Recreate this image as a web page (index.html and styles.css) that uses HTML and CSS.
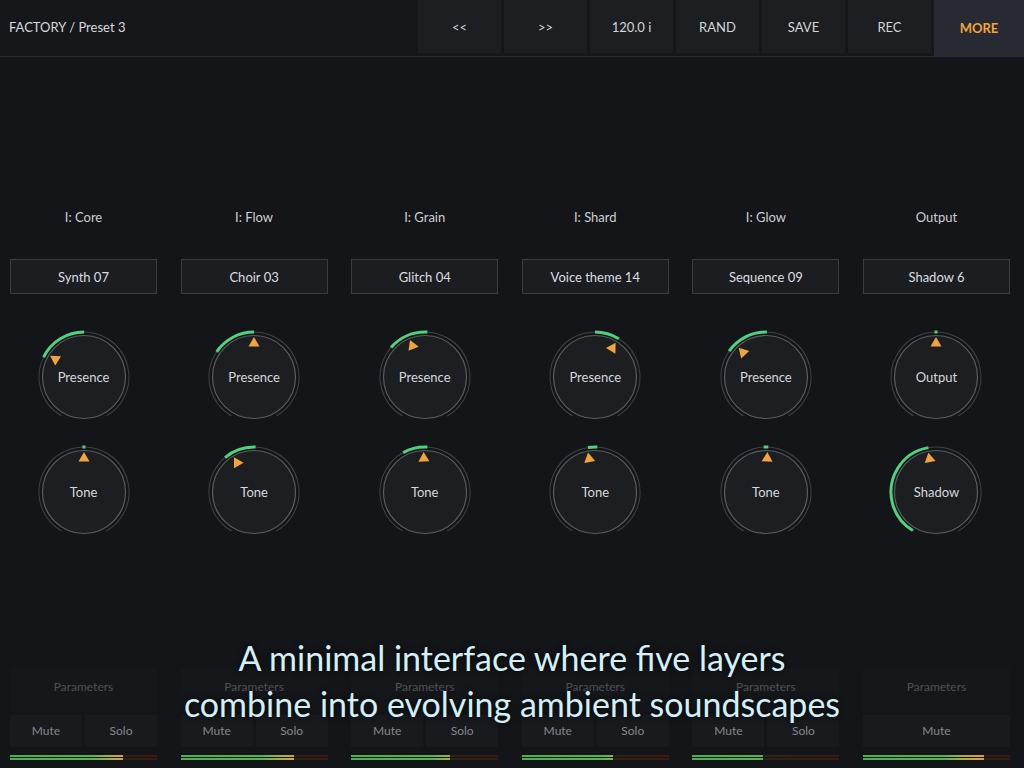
FILE: index.html
```html
<!DOCTYPE html>
<html lang="en">
<head>
  <meta charset="UTF-8" />
  <meta name="viewport" content="width=device-width, initial-scale=1.0"/>
  <title>Layers</title>
  <link rel="stylesheet" href="styles.css">
</head>
<body>
  <header class="topbar">
    <div class="preset-name">FACTORY / Preset 3</div>
    <nav class="actions">
      <button class="action">&lt;&lt;</button>
      <button class="action">&gt;&gt;</button>
      <button class="action">120.0 i</button>
      <button class="action">RAND</button>
      <button class="action">SAVE</button>
      <button class="action">REC</button>
      <button class="action more">MORE</button>
    </nav>
  </header>

  <main class="columns">

    <!-- layer 1 -->
    <section class="col">
      <div class="col-label">I: Core</div>
      <div class="preset">Synth 07</div>
      <div class="knob">
        <svg viewBox="0 0 100 100">
          <circle class="ring" cx="50" cy="50" r="45" stroke-dasharray="235.6 300" transform="rotate(120 50 50)"/>
          <circle class="arc" cx="50" cy="50" r="45" stroke-dasharray="50.3 300" transform="rotate(-154 50 50)"/>
          <circle class="face" cx="50" cy="50" r="41.5"/>
          <polygon class="pointer" points="50,10 44.5,19.5 55.5,19.5" transform="rotate(-58 50 50)"/>
        </svg>
        <span class="knob-label">Presence</span>
      </div>
      <div class="knob">
        <svg viewBox="0 0 100 100">
          <circle class="ring" cx="50" cy="50" r="45" stroke-dasharray="235.6 300" transform="rotate(120 50 50)"/>
          <circle class="arc" cx="50" cy="50" r="45" stroke-dasharray="3.1 300" transform="rotate(-92 50 50)"/>
          <circle class="face" cx="50" cy="50" r="41.5"/>
          <polygon class="pointer" points="50,10 44.5,19.5 55.5,19.5"/>
        </svg>
        <span class="knob-label">Tone</span>
      </div>
      <div class="params">Parameters</div>
      <div class="toggles">
        <button class="toggle">Mute</button>
        <button class="toggle">Solo</button>
      </div>
      <div class="meter"><div class="meter-fill" style="width: 77%"></div></div>
    </section>

    <!-- layer 2 -->
    <section class="col">
      <div class="col-label">I: Flow</div>
      <div class="preset">Choir 03</div>
      <div class="knob">
        <svg viewBox="0 0 100 100">
          <circle class="ring" cx="50" cy="50" r="45" stroke-dasharray="235.6 300" transform="rotate(120 50 50)"/>
          <circle class="arc" cx="50" cy="50" r="45" stroke-dasharray="44 300" transform="rotate(-146 50 50)"/>
          <circle class="face" cx="50" cy="50" r="41.5"/>
          <polygon class="pointer" points="50,10 44.5,19.5 55.5,19.5"/>
        </svg>
        <span class="knob-label">Presence</span>
      </div>
      <div class="knob">
        <svg viewBox="0 0 100 100">
          <circle class="ring" cx="50" cy="50" r="45" stroke-dasharray="235.6 300" transform="rotate(120 50 50)"/>
          <circle class="arc" cx="50" cy="50" r="45" stroke-dasharray="33 300" transform="rotate(-130 50 50)"/>
          <circle class="face" cx="50" cy="50" r="41.5"/>
          <polygon class="pointer" points="50,10 44.5,19.5 55.5,19.5" transform="rotate(-30 50 50)"/>
        </svg>
        <span class="knob-label">Tone</span>
      </div>
      <div class="params">Parameters</div>
      <div class="toggles">
        <button class="toggle">Mute</button>
        <button class="toggle">Solo</button>
      </div>
      <div class="meter"><div class="meter-fill" style="width: 77%"></div></div>
    </section>

    <!-- layer 3 -->
    <section class="col">
      <div class="col-label">I: Grain</div>
      <div class="preset">Glitch 04</div>
      <div class="knob">
        <svg viewBox="0 0 100 100">
          <circle class="ring" cx="50" cy="50" r="45" stroke-dasharray="235.6 300" transform="rotate(120 50 50)"/>
          <circle class="arc" cx="50" cy="50" r="45" stroke-dasharray="40.8 300" transform="rotate(-139 50 50)"/>
          <circle class="face" cx="50" cy="50" r="41.5"/>
          <polygon class="pointer" points="50,10 44.5,19.5 55.5,19.5" transform="rotate(-22 50 50)"/>
        </svg>
        <span class="knob-label">Presence</span>
      </div>
      <div class="knob">
        <svg viewBox="0 0 100 100">
          <circle class="ring" cx="50" cy="50" r="45" stroke-dasharray="235.6 300" transform="rotate(120 50 50)"/>
          <circle class="arc" cx="50" cy="50" r="45" stroke-dasharray="25.1 300" transform="rotate(-119 50 50)"/>
          <circle class="face" cx="50" cy="50" r="41.5"/>
          <polygon class="pointer" points="50,10 44.5,19.5 55.5,19.5" transform="rotate(-2 50 50)"/>
        </svg>
        <span class="knob-label">Tone</span>
      </div>
      <div class="params">Parameters</div>
      <div class="toggles">
        <button class="toggle">Mute</button>
        <button class="toggle">Solo</button>
      </div>
      <div class="meter"><div class="meter-fill" style="width: 67%"></div></div>
    </section>

    <!-- layer 4 -->
    <section class="col">
      <div class="col-label">I: Shard</div>
      <div class="preset">Voice theme 14</div>
      <div class="knob">
        <svg viewBox="0 0 100 100">
          <circle class="ring" cx="50" cy="50" r="45" stroke-dasharray="235.6 300" transform="rotate(120 50 50)"/>
          <circle class="arc" cx="50" cy="50" r="45" stroke-dasharray="25.1 300" transform="rotate(-90 50 50)"/>
          <circle class="face" cx="50" cy="50" r="41.5"/>
          <polygon class="pointer" points="50,10 44.5,19.5 55.5,19.5" transform="rotate(31 50 50)"/>
        </svg>
        <span class="knob-label">Presence</span>
      </div>
      <div class="knob">
        <svg viewBox="0 0 100 100">
          <circle class="ring" cx="50" cy="50" r="45" stroke-dasharray="235.6 300" transform="rotate(120 50 50)"/>
          <circle class="arc" cx="50" cy="50" r="45" stroke-dasharray="9.4 300" transform="rotate(-99 50 50)"/>
          <circle class="face" cx="50" cy="50" r="41.5"/>
          <polygon class="pointer" points="50,10 44.5,19.5 55.5,19.5" transform="rotate(-10 50 50)"/>
        </svg>
        <span class="knob-label">Tone</span>
      </div>
      <div class="params">Parameters</div>
      <div class="toggles">
        <button class="toggle">Mute</button>
        <button class="toggle">Solo</button>
      </div>
      <div class="meter"><div class="meter-fill" style="width: 62%"></div></div>
    </section>

    <!-- layer 5 -->
    <section class="col">
      <div class="col-label">I: Glow</div>
      <div class="preset">Sequence 09</div>
      <div class="knob">
        <svg viewBox="0 0 100 100">
          <circle class="ring" cx="50" cy="50" r="45" stroke-dasharray="235.6 300" transform="rotate(120 50 50)"/>
          <circle class="arc" cx="50" cy="50" r="45" stroke-dasharray="44 300" transform="rotate(-145 50 50)"/>
          <circle class="face" cx="50" cy="50" r="41.5"/>
          <polygon class="pointer" points="50,10 44.5,19.5 55.5,19.5" transform="rotate(-43 50 50)"/>
        </svg>
        <span class="knob-label">Presence</span>
      </div>
      <div class="knob">
        <svg viewBox="0 0 100 100">
          <circle class="ring" cx="50" cy="50" r="45" stroke-dasharray="235.6 300" transform="rotate(120 50 50)"/>
          <circle class="arc" cx="50" cy="50" r="45" stroke-dasharray="4.7 300" transform="rotate(-93 50 50)"/>
          <circle class="face" cx="50" cy="50" r="41.5"/>
          <polygon class="pointer" points="50,10 44.5,19.5 55.5,19.5" transform="rotate(2 50 50)"/>
        </svg>
        <span class="knob-label">Tone</span>
      </div>
      <div class="params">Parameters</div>
      <div class="toggles">
        <button class="toggle">Mute</button>
        <button class="toggle">Solo</button>
      </div>
      <div class="meter"><div class="meter-fill" style="width: 48%"></div></div>
    </section>

    <!-- output -->
    <section class="col">
      <div class="col-label">Output</div>
      <div class="preset">Shadow 6</div>
      <div class="knob">
        <svg viewBox="0 0 100 100">
          <circle class="ring" cx="50" cy="50" r="45" stroke-dasharray="235.6 300" transform="rotate(120 50 50)"/>
          <circle class="arc" cx="50" cy="50" r="45" stroke-dasharray="3.1 300" transform="rotate(-92 50 50)"/>
          <circle class="face" cx="50" cy="50" r="41.5"/>
          <polygon class="pointer" points="50,10 44.5,19.5 55.5,19.5"/>
        </svg>
        <span class="knob-label">Output</span>
      </div>
      <div class="knob">
        <svg viewBox="0 0 100 100">
          <circle class="ring" cx="50" cy="50" r="45" stroke-dasharray="235.6 300" transform="rotate(120 50 50)"/>
          <circle class="arc" cx="50" cy="50" r="45" stroke-dasharray="109.2 300" transform="rotate(-239 50 50)"/>
          <circle class="face" cx="50" cy="50" r="41.5"/>
          <polygon class="pointer" points="50,10 44.5,19.5 55.5,19.5" transform="rotate(-11 50 50)"/>
        </svg>
        <span class="knob-label">Shadow</span>
      </div>
      <div class="params">Parameters</div>
      <div class="toggles">
        <button class="toggle">Mute</button>
      </div>
      <div class="meter"><div class="meter-fill" style="width: 82%"></div></div>
    </section>

  </main>

  <p class="caption">A minimal interface where five layers<br>combine into evolving ambient soundscapes</p>
</body>
</html>
```

FILE: styles.css
```css
body {
  margin: 0;
  width: 1024px;
  height: 768px;
  overflow: hidden;
  position: relative;
  background: #141519;
  font-family: 'Lato', 'Noto Sans', sans-serif;
  color: #d2d3d5;
}

button {
  font-family: inherit;
  border: none;
  padding: 0;
  cursor: pointer;
}

/* top bar */

.topbar {
  display: flex;
  align-items: flex-start;
  height: 56px;
  background: #16171b;
  border-bottom: 1px solid #2a2b30;
}

.preset-name {
  flex: 1;
  padding-left: 9px;
  line-height: 54px;
  font-size: 13px;
  color: #d8d9db;
}

.actions {
  display: grid;
  grid-template-columns: repeat(6, 83px) 90px;
  column-gap: 3px;
}

.action {
  height: 53px;
  background: #1c1e22;
  color: #d4d5d7;
  font-size: 13px;
}

.action.more {
  height: 56px;
  background: #272a32;
  color: #f0a53a;
  font-weight: 700;
}

/* layer columns */

.columns {
  display: grid;
  grid-template-columns: repeat(6, 147px);
  column-gap: 23.6px;
  padding: 0 0 0 10px;
  margin-top: 152px;
}

.col {
  display: flex;
  flex-direction: column;
  align-items: center;
}

.col-label {
  height: 16px;
  line-height: 16px;
  font-size: 13px;
  color: #cdced0;
}

.preset {
  box-sizing: border-box;
  width: 100%;
  height: 35px;
  margin-top: 34px;
  line-height: 34px;
  text-align: center;
  font-size: 13px;
  color: #dcdde0;
  background: #1b1d21;
  border: 1px solid #3b3d42;
}

.knob {
  display: grid;
  width: 100px;
  height: 100px;
  margin-top: 33px;
}

.knob + .knob {
  margin-top: 15px;
}

.knob svg,
.knob-label {
  grid-area: 1 / 1;
}

.knob svg {
  width: 100px;
  height: 100px;
}

.knob-label {
  align-self: center;
  justify-self: center;
  font-size: 13px;
  color: #d6d7d9;
}

.ring {
  fill: none;
  stroke: #404246;
  stroke-width: 1;
}

.arc {
  fill: none;
  stroke: #4fd27f;
  stroke-width: 3;
}

.face {
  fill: #1c1e22;
  stroke: #5a5c61;
  stroke-width: 1.2;
}

.pointer {
  fill: #f2a43a;
}

/* bottom strip */

.params {
  box-sizing: border-box;
  width: 100%;
  height: 44px;
  margin-top: 126px;
  padding-top: 11px;
  text-align: center;
  font-size: 12px;
  color: #4e5156;
  background: #16171b;
}

.toggles {
  display: flex;
  gap: 3px;
  width: 100%;
  margin-top: 3px;
}

.toggle {
  flex: 1;
  height: 32px;
  padding-bottom: 2px;
  background: #191a1e;
  color: #85878b;
  font-size: 12px;
}

.meter {
  width: 100%;
  height: 5px;
  margin-top: 8px;
  background:
    linear-gradient(#141519, #141519) 0 2px / 100% 1px no-repeat,
    linear-gradient(90deg, #23281a, #2e2314 60%, #3a1a10);
}

.meter-fill {
  height: 5px;
  background:
    linear-gradient(#141519, #141519) 0 2px / 147px 1px no-repeat,
    linear-gradient(90deg, #4caf50 0%, #55b450 55%, #9fb04a 66%, #d4a24a 78%, #d98a3a 90%) 0 0 / 147px 5px no-repeat;
}

/* caption overlay */

.caption {
  position: absolute;
  left: 0;
  right: 0;
  top: 635px;
  margin: 0;
  text-align: center;
  font-size: 34px;
  line-height: 46px;
  color: #d3f0f7;
  text-shadow: 0 0 6px rgba(0, 0, 0, 0.8);
}
```
